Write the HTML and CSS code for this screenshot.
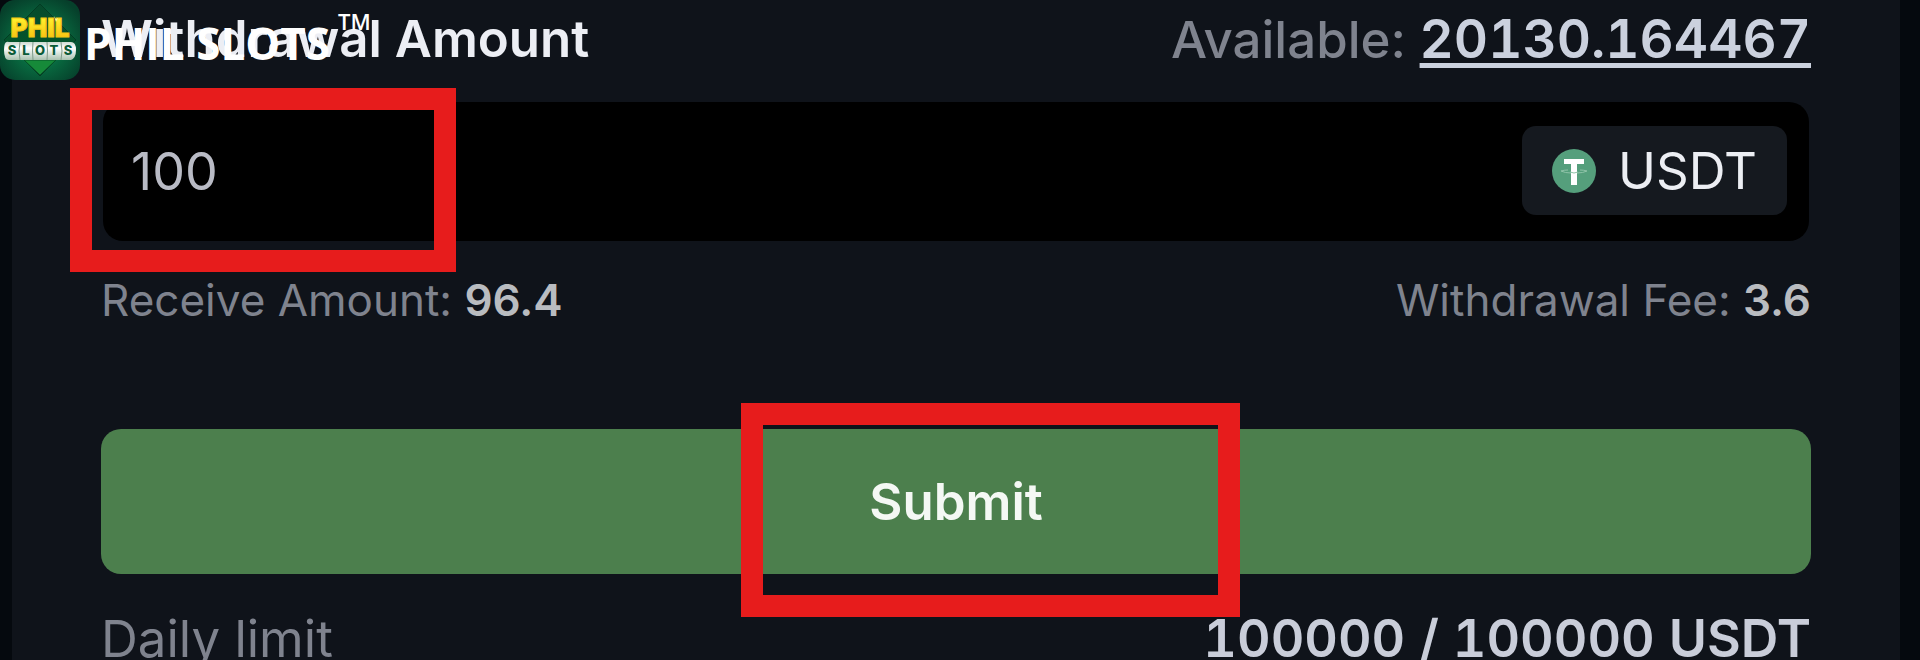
FILE: index.html
```html
<!DOCTYPE html>
<html lang="en">
<head>
<meta charset="utf-8">
<meta name="viewport" content="width=device-width, initial-scale=1">
<title>Withdrawal</title>
<link rel="stylesheet" href="styles.css">
</head>
<body>
<div class="brand">
  <svg class="brand-logo" viewBox="0 0 80 80" role="img" aria-label="Phil Slots logo">
    <defs>
      <radialGradient id="glow" cx="50%" cy="55%" r="62%">
        <stop offset="0" stop-color="#12a465"/>
        <stop offset=".5" stop-color="#08683f"/>
        <stop offset="1" stop-color="#06402b"/>
      </radialGradient>
      <linearGradient id="gem" x1="0" y1="0" x2="0" y2="1">
        <stop offset="0" stop-color="#064a2c"/>
        <stop offset=".6" stop-color="#04552c"/>
        <stop offset="1" stop-color="#1c9a3c"/>
      </linearGradient>
      <linearGradient id="gold" x1="0" y1="0" x2="0" y2="1">
        <stop offset="0.2" stop-color="#fff12e"/>
        <stop offset="1" stop-color="#f5b60c"/>
      </linearGradient>
      <linearGradient id="reel" x1="0" y1="0" x2="0" y2="1">
        <stop offset="0" stop-color="#c9d6cd"/>
        <stop offset=".35" stop-color="#ffffff"/>
        <stop offset="1" stop-color="#a9c2b0"/>
      </linearGradient>
    </defs>
    <rect width="80" height="80" rx="15" fill="url(#glow)"/>
    <path d="M40 4 76 40 40 76 4 40Z" fill="url(#gem)" stroke="#033c24"/>
    <path d="M24 60H56L40 75Z" fill="#168a39" stroke="#074f28"/>
    <text x="40" y="37" class="logo-phil" fill="url(#gold)" stroke="#f3c512" stroke-width="1">PHIL</text>
    <path d="M54 16l2 3 2 -1 -2 4Z" fill="#fff79a"/>
    <path d="M9 42H71Q76 42 76 50T71 60H9Q4 60 4 50T9 42Z" fill="url(#reel)"/>
    <path d="M20 42q-2 9 0 18M33 42q-1 9 0 18M47 42q1 9 0 18M61 42q2 9 0 18" fill="none" stroke="#7f9b8a" stroke-width="1"/>
    <g class="logo-slots" fill="#0a5a37">
      <text x="12" y="55">S</text><text x="26" y="55">L</text><text x="40" y="55">O</text><text x="54" y="55">T</text><text x="68" y="55">S</text>
    </g>
  </svg>
  <span class="brand-name">PHIL SLOTS</span><span class="brand-tm">TM</span>
</div>
<main class="panel">
  <form class="form">
    <div class="row row-title">
      <label class="title" for="amount">Withdrawal Amount</label>
      <span class="muted available">Available: <a class="balance" href="#">20130.164467</a></span>
    </div>
    <div class="field">
      <input class="amount" id="amount" type="text" inputmode="decimal" value="100">
      <button class="coin" type="button">
        <svg class="coin-icon" viewBox="0 0 44 44" aria-hidden="true">
          <circle cx="22" cy="22" r="22" fill="#559f7c"/>
          <path d="M9 22q4 2 10 2M35 22q-4 2 -10 2M9 22q3 -1 7 -1M35 22q-3 -1 -7 -1" fill="none" stroke="#8fc3a8" stroke-width="1"/>
          <path d="M12 10H32V15H25V36H19V15H12Z" fill="#fff"/>
          <path d="M18 23q4 2 8 0" fill="none" stroke="#8fc3a8" stroke-width="1"/>
        </svg>
        <span>USDT</span>
      </button>
      <span class="marker marker-amount"></span>
    </div>
    <div class="row row-info">
      <span class="muted">Receive Amount: <b class="value">96.4</b></span>
      <span class="muted">Withdrawal Fee: <b class="value">3.6</b></span>
    </div>
    <div class="action">
      <button class="submit" type="button">Submit</button>
      <span class="marker marker-submit"></span>
    </div>
    <div class="row row-limit">
      <span class="muted">Daily limit</span>
      <span class="limit">100000 / 100000 USDT</span>
    </div>
  </form>
</main>
</body>
</html>
```

FILE: styles.css
```css
* { box-sizing: border-box; }

body {
  margin: 0;
  height: 100vh;
  overflow: hidden;
  background: #05090e;
  color: #eceef4;
  font-family: Inter, "Liberation Sans", sans-serif;
}

.brand {
  position: absolute;
  top: 0;
  left: 0;
  z-index: 2;
  display: flex;
  align-items: flex-start;
  color: #fff;
  font-family: "Open Sans", "Noto Sans", sans-serif;
}
.brand-logo { width: 80px; height: 80px; }
.brand-name {
  margin-left: 4px;
  padding-top: 11px;
  font-size: 44px;
  font-weight: 700;
  line-height: 64px;
}
.brand-tm {
  margin-left: 8px;
  padding-top: 6px;
  font-size: 22px;
  font-weight: 600;
  line-height: 30px;
}
.logo-phil {
  font: 900 26px Inter, sans-serif;
  text-anchor: middle;
}
.logo-slots {
  font: 800 13px Inter, sans-serif;
  text-anchor: middle;
}

.panel {
  min-height: 100%;
  margin: 0 20px 0 12px;
  padding: 7px 89px 0;
  background: #0f131a;
}
.form { display: flex; flex-direction: column; }

.row {
  display: flex;
  justify-content: space-between;
  white-space: nowrap;
}
.row-title, .row-limit { font-size: 51px; line-height: 64px; }
.row-title { height: 64px; }
.row-info { margin-top: 32px; font-size: 44px; line-height: 54px; }
.row-limit { margin-top: 33px; }

.title { font-weight: 600; }
.muted { color: #7f838e; }
.available { font-weight: 500; }
.balance {
  color: #cbd1de;
  font-size: 53px;
  font-variant-numeric: tabular-nums;
  font-weight: 600;
  text-decoration: underline;
  text-decoration-thickness: 5px;
  text-underline-offset: 5px;
  text-decoration-skip-ink: none;
}
.value { color: #b9bcc0; font-weight: 600; }
.limit {
  color: #c9cdd9;
  font-size: 52px;
  font-variant-numeric: tabular-nums;
  font-weight: 600;
}

.field {
  position: relative;
  display: flex;
  align-items: center;
  height: 139px;
  margin: 31px 2px 0;
  padding: 0 22px 2px 28px;
  border-radius: 20px;
  background: #000;
}
.amount {
  flex: 1;
  min-width: 0;
  padding: 2px 0 0;
  border: 0;
  outline: 0;
  background: transparent;
  color: #b9bbc5;
  font: 400 52px/64px Inter, sans-serif;
}
.coin {
  display: flex;
  align-items: center;
  gap: 22px;
  height: 89px;
  padding: 0 30px;
  border: 0;
  border-radius: 14px;
  background: #15191f;
  color: #eceef3;
  font: 400 51px/64px Inter, sans-serif;
}
.coin-icon { width: 44px; height: 44px; }

.action { position: relative; margin-top: 102px; }
.submit {
  display: block;
  width: 100%;
  height: 145px;
  padding: 0;
  border: 0;
  border-radius: 20px;
  background: #4c7f4d;
  color: #f4f8f4;
  font: 600 51px/64px Inter, sans-serif;
}

.marker {
  position: absolute;
  border: 22px solid #e71c1c;
  pointer-events: none;
}
.marker-amount { top: -14px; left: -33px; width: 386px; height: 184px; }
.marker-submit { top: -26px; left: calc(50% - 215px); width: 499px; height: 214px; }
```
